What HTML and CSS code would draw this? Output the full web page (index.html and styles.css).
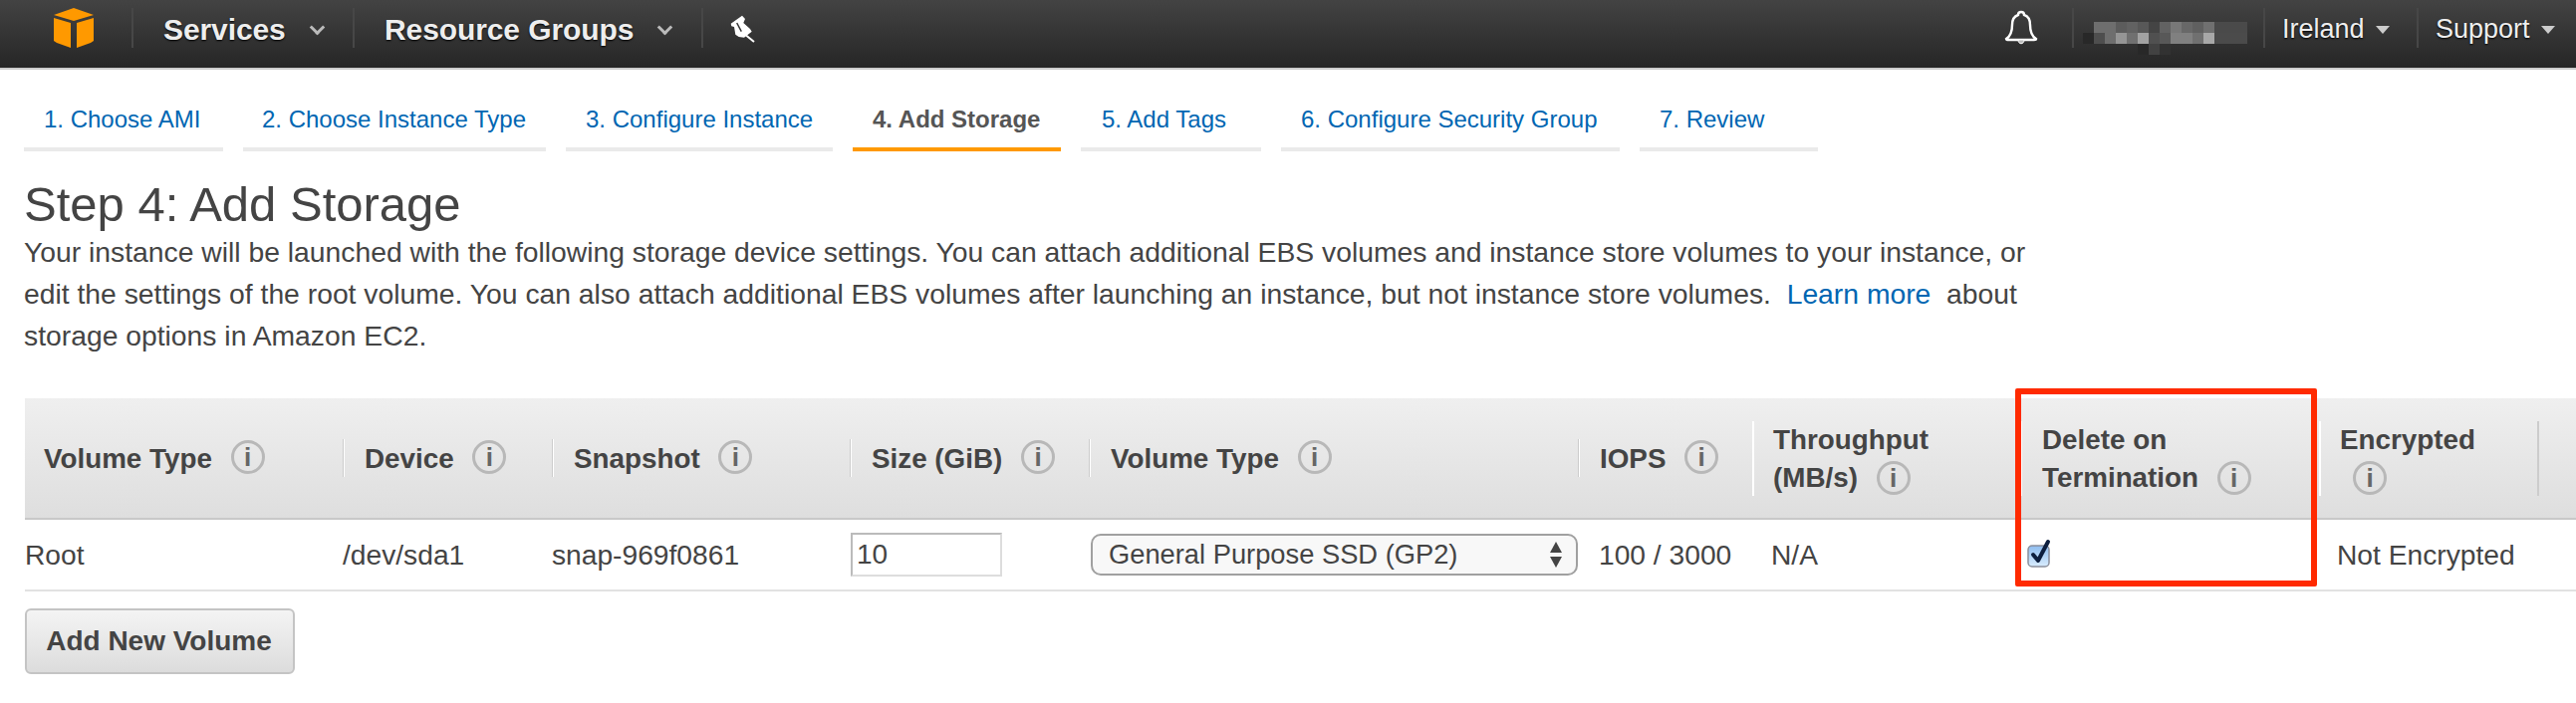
FILE: index.html
```html
<!DOCTYPE html>
<html lang="en">
<head>
	<meta charset="UTF-8">
	<title>Step 4: Add Storage</title>
	<link rel="stylesheet" href="styles.css">
</head>
<body>
	<div class="topbar">
		<div class="logo">
			<svg width="40" height="40" viewBox="0 0 40 40"><path fill="#f90" d="M20 0 40 7 20 13 0 7z"/><path fill="#f90" d="M0 10 17 15V40L3 35 0 33z"/><path fill="#f90" d="M40 10 23 15V40L37 35 40 33z"/></svg>
		</div>
		<div class="nav-item nav-services">Services <i class="chev"></i></div>
		<div class="nav-item nav-groups">Resource Groups <i class="chev"></i></div>
		<div class="nav-item nav-pin">
			<svg width="26" height="28" viewBox="0 0 26 28"><path fill="#fff" d="M12 .7 15 4 13.300 8 20 14 21.700 16.700 14 22.700 8.700 22 5.300 19.700 4 12 1.300 11.300 .7 8.700z"/><path fill="none" stroke="#fff" stroke-width="2" d="M16 20.500 24 27"/><path fill="none" stroke="#333" stroke-width="1.500" d="M6.700 8 11.300 16.700"/></svg>
		</div>
		<div class="nav-spacer"></div>
		<div class="nav-bell">
			<svg width="34" height="36" viewBox="0 0 34 36"><path fill="none" stroke="#fff" stroke-width="2.400" d="M2 29C7 26 8 21 8 15 8 9 11 6 14 5 14 1 20 1 20 5 23 6 26 9 26 15 26 21 27 26 32 29 32 30 31 30 30 30H4C3 30 2 30 2 29z"/><path fill="#bbb" stroke="#fff" d="M14 30C14 35 20 35 20 30z"/></svg>
		</div>
		<div class="nav-account">
			<svg width="170" height="37" viewBox="0 0 170 37" shape-rendering="crispEdges">
				<g transform="translate(14 4)">
					<rect x="0" width="11" height="11" fill="#6e6e6e"/><rect x="11" width="11" height="11" fill="#6e6e6e"/><rect x="22" width="11" height="11" fill="#5c5c5c"/><rect x="33" width="11" height="11" fill="#626262"/><rect x="44" width="11" height="11" fill="#585858"/><rect x="55" width="11" height="11" fill="#444"/><rect x="66" width="11" height="11" fill="#626262"/><rect x="77" width="11" height="11" fill="#787878"/><rect x="88" width="11" height="11" fill="#686868"/><rect x="99" width="11" height="11" fill="#606060"/><rect x="110" width="11" height="11" fill="#707070"/><rect x="121" width="33" height="11" fill="#4a4a4a"/>
					<rect x="-11" y="11" width="11" height="11" fill="#282828"/>
					<rect x="0" y="11" width="11" height="11" fill="#4e4e4e"/><rect x="11" y="11" width="11" height="11" fill="#6e6e6e"/><rect x="22" y="11" width="11" height="11" fill="#959595"/><rect x="33" y="11" width="11" height="11" fill="#707070"/><rect x="44" y="11" width="11" height="11" fill="#a2a2a2"/><rect x="55" y="11" width="11" height="11" fill="#505050"/><rect x="66" y="11" width="11" height="11" fill="#585858"/><rect x="77" y="11" width="22" height="11" fill="#808080"/><rect x="99" y="11" width="11" height="11" fill="#707070"/><rect x="110" y="11" width="11" height="11" fill="#a8a8a8"/><rect x="121" y="11" width="33" height="11" fill="#4b4b4b"/>
					<rect x="44" y="22" width="11" height="11" fill="#282828"/><rect x="55" y="22" width="11" height="11" fill="#424242"/><rect x="66" y="22" width="11" height="11" fill="#323232"/>
				</g>
			</svg>
		</div>
		<div class="nav-item nav-region">Ireland <i class="caret"></i></div>
		<div class="nav-item nav-support">Support <i class="caret"></i></div>
	</div>

	<div class="main">
		<div class="tabs">
			<a class="tab tab-ami">1. Choose AMI</a>
			<a class="tab tab-type">2. Choose Instance Type</a>
			<a class="tab tab-conf">3. Configure Instance</a>
			<a class="tab tab-storage selected">4. Add Storage</a>
			<a class="tab tab-tags">5. Add Tags</a>
			<a class="tab tab-sg">6. Configure Security Group</a>
			<a class="tab tab-review">7. Review</a>
		</div>

		<h1>Step 4: Add Storage</h1>
		<p class="intro">Your instance will be launched with the following storage device settings. You can attach additional EBS volumes and instance store volumes to your instance, or edit the settings of the root volume. You can also attach additional EBS volumes after launching an instance, but not instance store volumes. &nbsp;<a>Learn more</a>&nbsp; about storage options in Amazon EC2.</p>

		<div class="volumes">
			<div class="vol-head">
				<div class="th first">Volume Type <i class="info">i</i></div>
				<div class="th">Device <i class="info">i</i></div>
				<div class="th">Snapshot <i class="info">i</i></div>
				<div class="th">Size (GiB) <i class="info">i</i></div>
				<div class="th">Volume Type <i class="info">i</i></div>
				<div class="th">IOPS <i class="info">i</i></div>
				<div class="th tall">Throughput<br>(MB/s) <i class="info">i</i></div>
				<div class="th tall th-delete">Delete on<br>Termination <i class="info">i</i></div>
				<div class="th tall">Encrypted<br><i class="info info-alone">i</i></div>
				<div class="th tall end"></div>
			</div>
			<div class="vol-row">
				<div class="td">Root</div>
				<div class="td">/dev/sda1</div>
				<div class="td">snap-969f0861</div>
				<div class="td"><input class="size" type="text" value="10"></div>
				<div class="td">
					<div class="select">
						General Purpose SSD (GP2)
						<svg width="14" height="26" viewBox="0 0 14 26"><path fill="#444" d="M7 0 13 11H1z"/><path fill="#444" d="M1 15H13L7 26z"/></svg>
					</div>
				</div>
				<div class="td td-iops">100 / 3000</div>
				<div class="td td-tp">N/A</div>
				<div class="td td-check">
					<svg width="26" height="30" viewBox="0 0 26 30">
						<defs><linearGradient id="cb" x1="0" y1="0" x2="0" y2="1"><stop offset="0" stop-color="#8fbdf0"/><stop offset="1" stop-color="#d8ecfd"/></linearGradient></defs>
						<rect x="1" y="7" width="21" height="21" rx="4" fill="url(#cb)" stroke="#8a8f9c" stroke-width="1.500"/>
						<path fill="none" stroke="#0d1f3f" stroke-width="4" stroke-linecap="round" stroke-linejoin="round" d="M6 16 11 22 21 3"/>
					</svg>
				</div>
				<div class="td td-enc">Not Encrypted</div>
			</div>
		</div>

		<button class="add-btn">Add New Volume</button>
	</div>

	<div class="callout"></div>
</body>
</html>
```

FILE: styles.css
```css
* {
	box-sizing: border-box;
}
body {
	margin: 0;
	font-family: "Liberation Sans", Arial, sans-serif;
	color: #444;
	background: #fff;
	position: relative;
}
i {
	font-style: normal;
}

/* top bar */
.topbar {
	height: 70px;
	display: flex;
	align-items: flex-start;
	padding-top: 8px;
	background: linear-gradient(#434343, #262626);
	border-bottom: 2px solid #ccc;
	color: #eee;
}
.logo {
	width: 132px;
	padding-left: 54px;
	height: 40px;
}
.nav-item {
	height: 40px;
	line-height: 43px;
	border-left: 2px solid #474747;
	white-space: nowrap;
	text-shadow: 0 1px 2px #000;
}
.nav-services, .nav-groups {
	font-size: 30px;
	font-weight: bold;
	letter-spacing: -0.1px;
	padding-left: 30px;
}
.nav-services {
	width: 222px;
}
.nav-groups {
	width: 350px;
}
.nav-pin {
	padding: 7px 0 0 27px;
	width: 70px;
}
.nav-pin svg {
	display: block;
}
.nav-spacer {
	flex: 1;
}
.nav-bell {
	width: 68px;
	height: 40px;
	padding-top: 2px;
}
.nav-account {
	width: 192px;
	height: 40px;
	border-left: 2px solid #474747;
	padding: 10px 0 0 6px;
}
.nav-region, .nav-support {
	font-size: 27px;
	padding-left: 17px;
}
.nav-region {
	width: 154px;
}
.nav-support {
	width: 160px;
}
.chev {
	display: inline-block;
	width: 11px;
	height: 11px;
	margin: 0 0 7px 18px;
	border-right: 3px solid #bbb;
	border-bottom: 3px solid #bbb;
	transform: rotate(45deg);
}
.caret {
	display: inline-block;
	margin: 0 0 4px 4px;
	border-top: 8px solid #ccc;
	border-left: 7px solid transparent;
	border-right: 7px solid transparent;
}

/* wizard */
.main {
	padding: 30px 0 0 24px;
}
.tabs {
	display: flex;
	gap: 20px;
}
.tab {
	display: block;
	height: 52px;
	padding-left: 20px;
	line-height: 40px;
	font-size: 24px;
	color: #0066b2;
	border-bottom: 4px solid #eaeaea;
}
.tab.selected {
	color: #555;
	font-weight: bold;
	border-bottom-color: #f90;
}
.tab-ami { width: 200px; }
.tab-type { width: 304px; padding-left: 19px; }
.tab-conf { width: 268px; }
.tab-storage { width: 209px; }
.tab-tags { width: 181px; padding-left: 21px; }
.tab-sg { width: 340px; }
.tab-review { width: 179px; }

h1 {
	margin: 26px 0 0;
	font-size: 49px;
	font-weight: normal;
	line-height: 54px;
}
.intro {
	width: 2040px;
	margin: 0;
	font-size: 28.3px;
	line-height: 42px;
}
.intro a {
	color: #0066b2;
}

/* volume table */
.volumes {
	margin: 42px 0 0 1px;
}
.vol-head, .vol-row {
	display: grid;
	grid-template-columns: 319px 210px 299px 240px 491px 175px 269px 300px 219px 1fr;
	align-items: center;
}
.vol-head {
	height: 122px;
	background: linear-gradient(#efefef, #dedede);
	border-bottom: 2px solid #c8c8c8;
	font-size: 27.8px;
	font-weight: bold;
}
.th {
	height: 38px;
	line-height: 40px;
	padding-left: 21px;
	border-left: 1px solid #ccc;
	box-shadow: inset 1px 0 #fff;
	white-space: nowrap;
}
.th.first {
	padding-left: 19px;
	border-left: 0;
	box-shadow: none;
}
.th.tall {
	height: 75px;
	line-height: 38px;
	padding-left: 19px;
	border-left: 2px solid #fff;
	box-shadow: none;
}
.th.th-delete {
	padding-left: 20px;
}
.th.end {
	border-left: 2px solid #ccc;
}
.info {
	display: inline-block;
	width: 34px;
	height: 34px;
	margin-left: 11px;
	line-height: 28px;
	text-align: center;
	vertical-align: 2px;
	border: 3px solid #b8b8b8;
	border-radius: 50%;
	font-size: 26px;
	font-weight: bold;
	color: #666;
}
.info-alone {
	margin-left: 13px;
}
.th.tall .info {
	vertical-align: 0;
}
.vol-row {
	height: 72px;
	border-bottom: 2px solid #e2e2e2;
	font-size: 28.2px;
}
.td-iops {
	padding-left: 21px;
}
.td-tp {
	padding-left: 19px;
}
.td-check {
	padding: 0 0 2px 7px;
}
.td-check svg {
	display: block;
}
.td-enc {
	padding-left: 18px;
}
.size {
	display: block;
	width: 152px;
	height: 44px;
	margin-left: 1px;
	padding: 0 0 0 4px;
	border: 2px solid #ddd;
	border-top-color: #bbb;
	border-left-color: #bbb;
	font-family: inherit;
	font-size: 28px;
	color: #444;
}
.select {
	position: relative;
	width: 489px;
	height: 42px;
	margin-left: 2px;
	padding-left: 16px;
	line-height: 38px;
	font-size: 27.3px;
	background: #f8f8f8;
	border: 2px solid #a0a0a0;
	border-radius: 10px;
}
.select svg {
	position: absolute;
	right: 13px;
	top: 6px;
}

.add-btn {
	display: block;
	width: 271px;
	height: 66px;
	margin: 17px 0 0 1px;
	padding: 0 2px 0 0;
	font-family: inherit;
	font-size: 28px;
	font-weight: bold;
	color: #444;
	background: linear-gradient(#f4f4f4, #dcdcdc);
	border: 2px solid #c4c4c4;
	border-radius: 6px;
}

/* red box drawn over the screenshot */
.callout {
	position: absolute;
	left: 2023px;
	top: 390px;
	width: 303px;
	height: 199px;
	border: 6px solid #ff2a00;
	border-radius: 2px;
}
```
